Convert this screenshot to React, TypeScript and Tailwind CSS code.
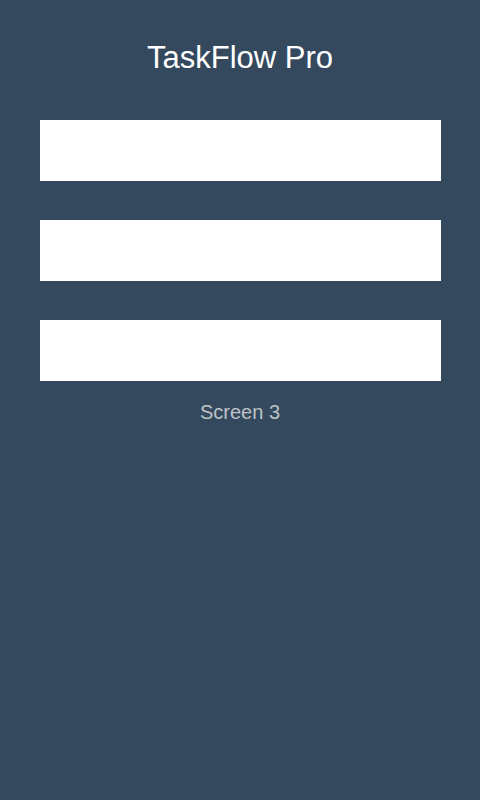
export default function App() {
  return (
    <div className="min-h-[800px] w-[480px] bg-[#34495e] flex flex-col" style={{ fontFamily: '"Liberation Sans", Arial, sans-serif' }}>
      <h1 className="mt-[41px] text-center text-[31px] leading-[34px] text-white">TaskFlow Pro</h1>
      <div className="mt-[45px] ml-[40px] flex flex-col gap-[39px]">
        <div className="h-[61px] w-[401px] bg-white" />
        <div className="h-[61px] w-[401px] bg-white" />
        <div className="h-[61px] w-[401px] bg-white" />
      </div>
      <p className="mt-[20px] text-center text-[20px] leading-[23px] text-[#bdc3c7]">Screen 3</p>
    </div>
  );
}
